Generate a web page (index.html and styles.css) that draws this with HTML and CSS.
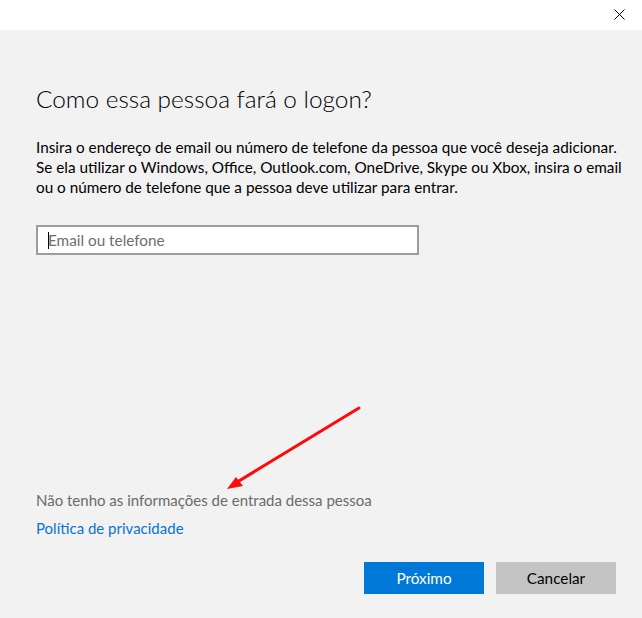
FILE: index.html
```html
<!DOCTYPE html>
<html lang="pt-BR">
<head>
  <meta charset="UTF-8" />
  <title>Adicionar uma pessoa</title>
  <link rel="stylesheet" href="styles.css">
</head>
<body>

  <div class="window">
    <!-- Title bar with close button -->
    <div class="titlebar">
      <button class="close-btn" aria-label="Fechar">
        <svg width="11" height="11" viewBox="0 0 11 11">
          <path d="M0.5 0.5 L10.5 10.5 M10.5 0.5 L0.5 10.5" stroke="#000" stroke-width="1" fill="none"/>
        </svg>
      </button>
    </div>

    <div class="content">
      <h1>Como essa pessoa fará o logon?</h1>
      <p class="intro">
        Insira o endereço de email ou número de telefone da pessoa que você deseja adicionar.<br>
        Se ela utilizar o Windows, Office, Outlook.com, OneDrive, Skype ou Xbox, insira o email<br>
        ou o número de telefone que a pessoa deve utilizar para entrar.
      </p>

      <div class="field">
        <span class="caret"></span>
        <input type="text" placeholder="Email ou telefone">
      </div>

      <div class="links">
        <div class="no-info">Não tenho as informações de entrada dessa pessoa</div>
        <a class="privacy" href="#">Política de privacidade</a>
      </div>

      <div class="actions">
        <button class="btn primary">Próximo</button>
        <button class="btn secondary">Cancelar</button>
      </div>
    </div>

    <!-- Red annotation arrow -->
    <svg class="arrow" width="642" height="618" viewBox="0 0 642 618">
      <line x1="359" y1="408" x2="234" y2="484" stroke="#ff0a0a" stroke-width="3" stroke-linecap="round"/>
      <polygon points="227,489 236,477 243,486" fill="#ff0a0a"/>
    </svg>
  </div>

</body>
</html>
```

FILE: styles.css
```css
* {
  box-sizing: border-box;
  margin: 0;
  padding: 0;
}

body {
  background: #f2f2f2;
  font-family: 'Lato', 'Segoe UI', sans-serif;
  color: #000;
}

.window {
  position: relative;
  width: 642px;
  height: 618px;
  display: flex;
  flex-direction: column;
  overflow: hidden;
}

.titlebar {
  height: 30px;
  background: #fff;
  display: flex;
  justify-content: flex-end;
}

.close-btn {
  width: 46px;
  height: 30px;
  border: none;
  background: transparent;
  display: flex;
  align-items: center;
  justify-content: center;
  padding-bottom: 2px;
}

.content {
  flex: 1;
  display: flex;
  flex-direction: column;
  padding: 53px 26px 24px 36px;
}

h1 {
  font-size: 24.4px;
  font-weight: 300;
  line-height: 32px;
  color: #000;
}

.intro {
  margin-top: 22px;
  font-size: 15.3px;
  line-height: 20px;
  white-space: nowrap;
}

.field {
  position: relative;
  margin-top: 28px;
  width: 383px;
  height: 30px;
}

.field input {
  width: 100%;
  height: 100%;
  border: 2px solid #9c9c9c;
  background: #fff;
  padding: 0 10px;
  font-family: inherit;
  font-size: 15.3px;
  outline: none;
}

.field input::placeholder {
  color: #6d6d6d;
}

.caret {
  position: absolute;
  left: 12px;
  top: 7px;
  width: 1px;
  height: 17px;
  background: #000;
}

.links {
  margin-top: auto;
  display: flex;
  flex-direction: column;
  gap: 8px;
  font-size: 15px;
  line-height: 20px;
}

.no-info {
  color: #6b6b6b;
}

.privacy {
  color: #0a74d4;
  text-decoration: none;
  align-self: flex-start;
}

.actions {
  margin-top: 24px;
  display: flex;
  justify-content: flex-end;
  gap: 12px;
}

.btn {
  width: 120px;
  height: 32px;
  border: none;
  font-family: inherit;
  font-size: 15.3px;
}

.primary {
  background: #0078d7;
  color: #fff;
}

.secondary {
  background: #c4c4c4;
  color: #000;
}

.arrow {
  position: absolute;
  top: 0;
  left: 0;
  pointer-events: none;
}
```
